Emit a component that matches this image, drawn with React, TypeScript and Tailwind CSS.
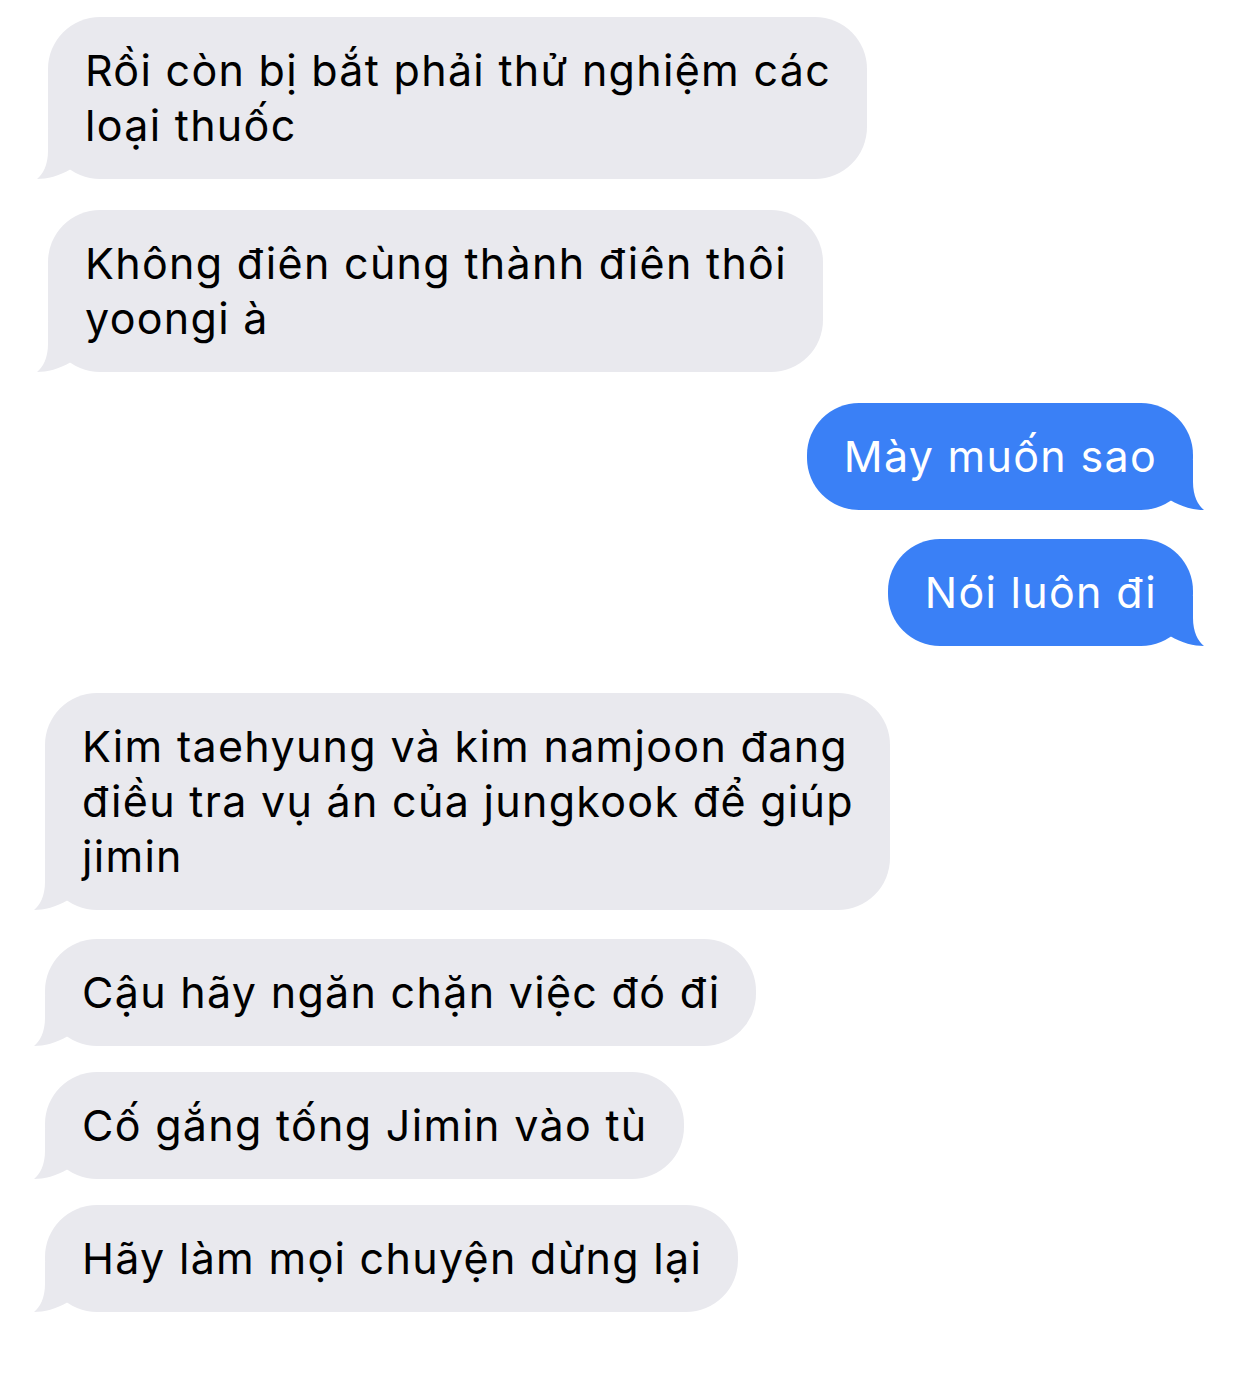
import React from 'react';

type Msg = { side: 'in' | 'out'; lines: string[]; ml?: string; gap?: string };

const messages: Msg[] = [
  { side: 'in', lines: ['Rồi còn bị bắt phải thử nghiệm các', 'loại thuốc'], ml: 'ml-[48px]' },
  { side: 'in', lines: ['Không điên cùng thành điên thôi', 'yoongi à'], ml: 'ml-[48px]', gap: 'mt-[31px]' },
  { side: 'out', lines: ['Mày muốn sao'], gap: 'mt-[31px]' },
  { side: 'out', lines: ['Nói luôn đi'], gap: 'mt-[29px]' },
  { side: 'in', lines: ['Kim taehyung và kim namjoon đang', 'điều tra vụ án của jungkook để giúp', 'jimin'], ml: 'ml-[45px]', gap: 'mt-[47px]' },
  { side: 'in', lines: ['Cậu hãy ngăn chặn việc đó đi'], ml: 'ml-[45px]', gap: 'mt-[29px]' },
  { side: 'in', lines: ['Cố gắng tống Jimin vào tù'], ml: 'ml-[45px]', gap: 'mt-[26px]' },
  { side: 'in', lines: ['Hãy làm mọi chuyện dừng lại'], ml: 'ml-[45px]', gap: 'mt-[26px]' },
];

// bubble tail, drawn for the left side; mirrored for outgoing bubbles
const Tail = ({ color, right }: { color: string; right?: boolean }) => (
  <svg
    width="50"
    height="50"
    viewBox="0 0 50 50"
    className={`absolute bottom-0 ${right ? 'right-[-11px] -scale-x-100' : 'left-[-11px]'}`}
  >
    <path d="M11 0 L11 22 C11 36 6 45 0 50 C10 50 22 47 34 40 L34 0 Z" fill={color} />
  </svg>
);

const Bubble = ({ msg }: { msg: Msg }) => {
  const out = msg.side === 'out';
  const color = out ? '#3a80f6' : '#e9e9ee';
  return (
    <div className={`flex ${out ? 'justify-end mr-[49px]' : `justify-start ${msg.ml}`} ${msg.gap ?? ''}`}>
      <div
        className={`relative rounded-[52px] pl-[37px] pr-[36px] py-[26px] whitespace-nowrap text-[43px] leading-[55px] tracking-[1.3px] ${
          out ? 'bg-[#3a80f6] text-white' : 'bg-[#e9e9ee] text-black'
        }`}
      >
        <Tail color={color} right={out} />
        <div className="relative">
          {msg.lines.map((l, i) => (
            <div key={i}>{l}</div>
          ))}
        </div>
      </div>
    </div>
  );
};

export default function App() {
  return (
    <div className="w-[1242px] h-[1389px] bg-white pt-[17px] font-['Inter','Noto_Sans',sans-serif]">
      {messages.map((m, i) => (
        <Bubble key={i} msg={m} />
      ))}
    </div>
  );
}
